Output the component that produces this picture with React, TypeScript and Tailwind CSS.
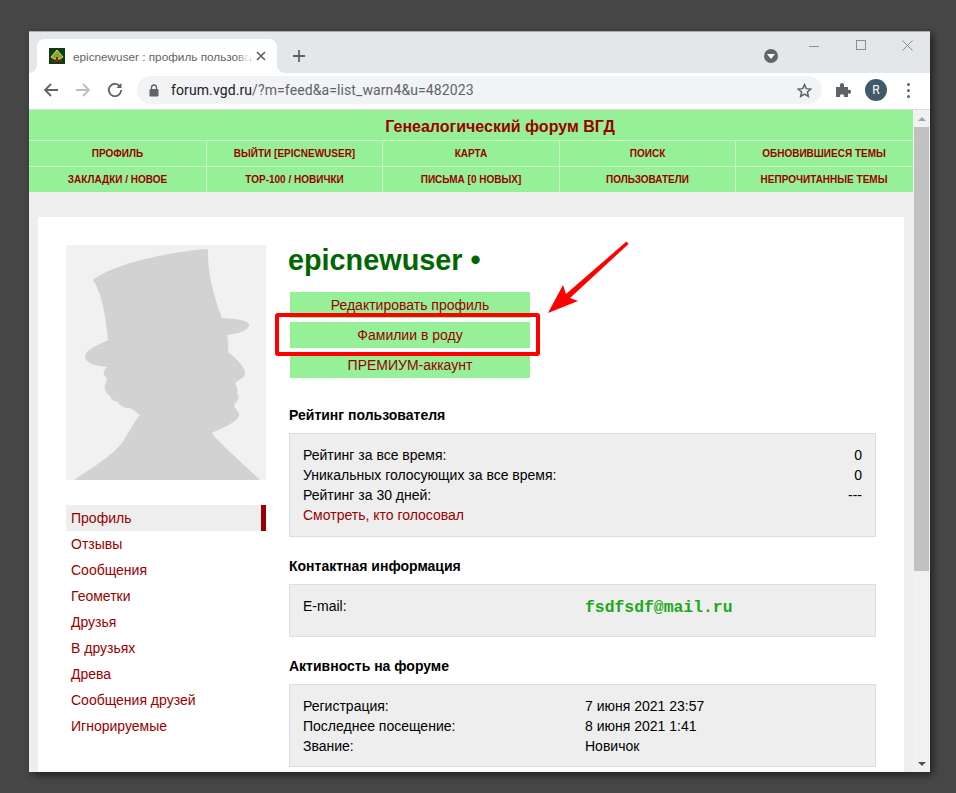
import { Fragment } from "react"

const navRows = [
  ["ПРОФИЛЬ", "ВЫЙТИ [EPICNEWUSER]", "КАРТА", "ПОИСК", "ОБНОВИВШИЕСЯ ТЕМЫ"],
  ["ЗАКЛАДКИ / НОВОЕ", "TOP-100 / НОВИЧКИ", "ПИСЬМА [0 НОВЫХ]", "ПОЛЬЗОВАТЕЛИ", "НЕПРОЧИТАННЫЕ ТЕМЫ"],
]

const sideLinks = ["Отзывы", "Сообщения", "Геометки", "Друзья", "В друзьях", "Древа", "Сообщения друзей", "Игнорируемые"]

function Favicon() {
  return (
    <svg width="16" height="16" viewBox="0 0 16 16">
      <rect width="16" height="16" fill="#0f3d0f" />
      <path d="M8 2 L14 9 L11 11 H5 L2 9 Z" fill="#7ea83a" stroke="#e8d84a" strokeWidth="1" />
      <rect x="7" y="9" width="2" height="5" fill="#a01818" />
      <path d="M3 13 H13" stroke="#a01818" strokeWidth="1" />
    </svg>
  )
}

function TabStrip() {
  return (
    <div className="flex h-[42px] items-end border-t border-[#a9abad] bg-[#e4e7ea] pl-2">
      <div className="relative flex h-[34px] w-[240px] items-center rounded-t-lg bg-white pl-3">
        {/* concave corners at the foot of the tab */}
        <div className="absolute -left-2 bottom-0 h-2 w-2 bg-white">
          <div className="h-full w-full rounded-br-lg bg-[#e4e7ea]" />
        </div>
        <div className="absolute -right-2 bottom-0 h-2 w-2 bg-white">
          <div className="h-full w-full rounded-bl-lg bg-[#e4e7ea]" />
        </div>
        <Favicon />
        <div className="relative ml-2 w-[177px]">
          <span className="whitespace-nowrap text-[11.75px] text-[#5f6368]">epicnewuser : профиль пользова</span>
          <div className="absolute inset-y-0 right-0 w-[14px] bg-gradient-to-r from-transparent to-white" />
        </div>
        <svg className="ml-[6px]" width="10" height="10" viewBox="0 0 10 10">
          <path d="M1 1 L9 9 M9 1 L1 9" stroke="#5f6368" strokeWidth="1.7" />
        </svg>
      </div>
      <svg className="mb-[10px] ml-[15px]" width="14" height="14" viewBox="0 0 14 14">
        <path d="M7 1 V13 M1 7 H13" stroke="#5f6368" strokeWidth="1.8" />
      </svg>
      <div className="ml-auto mb-[10px] flex h-[14px] w-[14px] items-center justify-center rounded-full bg-[#646464]">
        <div className="mt-px h-0 w-0 border-x-[4px] border-t-[5px] border-x-transparent border-t-white" />
      </div>
      <div className="flex h-full items-start self-start pt-[8px]">
        <svg className="ml-[31px] mt-[1px]" width="10" height="10" viewBox="0 0 10 10">
          <path d="M0 5.5 H10" stroke="#8a8c8e" strokeWidth="1" />
        </svg>
        <svg className="ml-[37px]" width="10" height="10" viewBox="0 0 10 10">
          <rect x="0.5" y="0.5" width="9" height="9" fill="none" stroke="#8a8c8e" strokeWidth="1" />
        </svg>
        <svg className="ml-[36px] mr-[17px]" width="11" height="11" viewBox="0 0 11 11">
          <path d="M0.5 0.5 L10.5 10.5 M10.5 0.5 L0.5 10.5" stroke="#8a8c8e" strokeWidth="1" />
        </svg>
      </div>
    </div>
  )
}

function Toolbar() {
  return (
    <div className="flex h-[37px] items-center border-b border-[#dadce0] bg-white pb-[2px] pl-[14px] font-['Roboto',sans-serif]">
      <svg width="16" height="16" viewBox="0 0 16 16">
        <path d="M15 8 H2 M8 2 L2 8 L8 14" fill="none" stroke="#5f6368" strokeWidth="1.8" />
      </svg>
      <svg className="ml-[16px]" width="16" height="16" viewBox="0 0 16 16">
        <path d="M1 8 H14 M8 2 L14 8 L8 14" fill="none" stroke="#bcbec0" strokeWidth="1.8" />
      </svg>
      <svg className="ml-[16px]" width="16" height="16" viewBox="0 0 16 16">
        <path d="M13.2 4.6 A6.2 6.2 0 1 0 14.2 8" fill="none" stroke="#5f6368" strokeWidth="1.8" />
        <path d="M14.5 1 V6 H9.5 Z" fill="#5f6368" />
      </svg>
      <div className="ml-[14px] flex h-[28px] w-[685px] items-center rounded-full bg-[#f1f3f4] pl-3">
        <svg width="10" height="13" viewBox="0 0 10 13">
          <path d="M2.5 5 V3.5 A2.5 2.5 0 0 1 7.5 3.5 V5" fill="none" stroke="#5f6368" strokeWidth="1.3" />
          <rect x="0.5" y="5" width="9" height="7.5" rx="1" fill="#5f6368" />
        </svg>
        <span className="ml-[12px] text-sm tracking-[0.1px] text-[#5f6368]">
          <span className="text-[#202124]">forum.vgd.ru</span>/?m=feed&amp;a=list_warn4&amp;u=482023
        </span>
        <svg className="ml-auto mr-[10px]" width="15" height="15" viewBox="0 0 24 24">
          <path d="M12 2.5 L14.9 9 L22 9.7 L16.6 14.4 L18.2 21.4 L12 17.7 L5.8 21.4 L7.4 14.4 L2 9.7 L9.1 9 Z" fill="none" stroke="#5f6368" strokeWidth="2.4" />
        </svg>
      </div>
      <svg className="ml-[13px]" width="16" height="16" viewBox="0 0 16 16">
        <path d="M1 5 H5 C4.5 2 5.5 1 7 1 C8.5 1 9.5 2 9 5 H13 V8 C15.5 7.3 16 8.5 16 9.8 C16 11.2 15.5 12.2 13 11.5 V15 H9 C9.4 13 8.5 12.3 7 12.3 C5.5 12.3 4.6 13 5 15 H1 Z" fill="#5f6368" />
      </svg>
      <div className="ml-[14px] flex h-[22px] w-[22px] items-center justify-center rounded-full bg-[#3f5a6b] text-xs text-white">R</div>
      <div className="ml-[20px] flex flex-col gap-[3px]">
        <div className="h-[3px] w-[3px] rounded-full bg-[#5f6368]" />
        <div className="h-[3px] w-[3px] rounded-full bg-[#5f6368]" />
        <div className="h-[3px] w-[3px] rounded-full bg-[#5f6368]" />
      </div>
    </div>
  )
}

function SiteNav() {
  return (
    <div className="bg-[#96f097]">
      <div className="flex h-[30px] items-center justify-center pl-[58px] pt-[3px] text-base font-bold text-[#990000]">
        Генеалогический форум ВГД
      </div>
      {navRows.map((row, i) => (
        <div key={i} className="grid h-[26px] grid-cols-[177px_176px_177px_176px_177px] border-t border-[#c6f5c6] pr-px">
          {row.map((label, j) => (
            <div
              key={label}
              className={
                j === 0
                  ? "flex items-center justify-center pt-px text-[10px] font-bold text-[#990000]"
                  : "flex items-center justify-center border-l border-[#c6f5c6] pt-px text-[10px] font-bold text-[#990000]"
              }
            >
              {label}
            </div>
          ))}
        </div>
      ))}
    </div>
  )
}

function Silhouette() {
  return (
    <svg width="200" height="235" viewBox="0 0 200 235" className="block bg-[#f1f1f1]">
      <path
        fill="#d2d2d2"
        d="M27 35 C45 20 100 7 141 4 C142 4 142 5 142 8 C142 30 148 52 156 73 C165 74 183 74 183 80 C183 86 170 89 161 90 C162 95 163 100 162 107 C170 113 179 122 179 128 C179 133 172 135 169 138 C171 142 172 146 171 148 C173 151 173 155 170 157 C168 159 168 161 169 163 C173 167 174 170 172 173 C166 180 155 183 146 188 C150 195 170 212 194 235 L8 235 C30 220 52 207 59 193 C64 186 68 176 74 170 C70 167 68 165 64 163 C58 163 54 161 52 157 C47 156 45 154 44 151 C40 148 38 145 39 140 C40 137 41 135 41 133 C37 130 36 127 41 122 C30 121 19 118 19 112 C19 105 32 100 42 95 C40 75 37 50 27 35 Z"
      />
    </svg>
  )
}

function Sidebar() {
  return (
    <div className="w-[200px]">
      <Silhouette />
      <div className="mt-[25px] flex h-[26px] items-center border-r-[5px] border-[#990000] bg-[#eeeeee] pl-[5px] text-[#990000]">
        Профиль
      </div>
      {sideLinks.map((link) => (
        <div key={link} className="flex h-[26px] items-center pl-[5px] text-[#990000]">
          {link}
        </div>
      ))}
    </div>
  )
}

function MainColumn() {
  return (
    <div className="w-[587px]">
      <h1 className="-ml-px h-[30px] text-[28.8px] font-bold leading-[30px] text-[#006600]">epicnewuser •</h1>
      <div className="ml-px mt-[17px] flex w-[240px] flex-col gap-[4px] text-[#990000]">
        <div className="flex h-[26px] items-center justify-center bg-[#96f097]">Редактировать профиль</div>
        <div className="flex h-[26px] items-center justify-center bg-[#96f097]">Фамилии в роду</div>
        <div className="flex h-[26px] items-center justify-center bg-[#96f097]">ПРЕМИУМ-аккаунт</div>
      </div>

      <h2 className="mt-[27px] h-5 font-bold leading-5">Рейтинг пользователя</h2>
      <div className="mt-2 border border-[#dddddd] bg-[#eeeeee] px-[13px] py-[11px] leading-5">
        <div className="flex justify-between"><span>Рейтинг за все время:</span><span>0</span></div>
        <div className="flex justify-between"><span>Уникальных голосующих за все время:</span><span>0</span></div>
        <div className="flex justify-between"><span>Рейтинг за 30 дней:</span><span>---</span></div>
        <div className="text-[#990000]">Смотреть, кто голосовал</div>
      </div>

      <h2 className="mt-[19px] h-5 font-bold leading-5">Контактная информация</h2>
      <div className="mt-2 grid grid-cols-[282px_1fr] border border-[#dddddd] bg-[#eeeeee] px-[13px] pb-[20px] pt-[11px] leading-5">
        <span>E-mail:</span>
        <span className="pt-[3px] font-['Liberation_Mono',monospace] text-[16.4px] font-bold leading-[17px] text-[#1aa81a]">fsdfsdf@mail.ru</span>
      </div>

      <h2 className="mt-[19px] h-5 font-bold leading-5">Активность на форуме</h2>
      <div className="mt-2 grid grid-cols-[282px_1fr] border border-[#dddddd] bg-[#eeeeee] px-[13px] pb-[10px] pt-[11px] leading-5">
        {[
          ["Регистрация:", "7 июня 2021 23:57"],
          ["Последнее посещение:", "8 июня 2021 1:41"],
          ["Звание:", "Новичок"],
        ].map(([k, v]) => (
          <Fragment key={k}>
            <span>{k}</span>
            <span>{v}</span>
          </Fragment>
        ))}
      </div>
    </div>
  )
}

function Scrollbar() {
  return (
    <div className="flex w-[17px] flex-col items-center bg-[#f1f1f1]">
      <div className="mt-[7px] h-0 w-0 border-x-[4px] border-b-[4px] border-x-transparent border-b-[#a3a3a3]" />
      <div className="mt-[6px] h-[444px] w-[15px] bg-[#c1c1c1]" />
      <div className="mt-auto mb-[6px] h-0 w-0 border-x-[4px] border-t-[4px] border-x-transparent border-t-[#505050]" />
    </div>
  )
}

export default function App() {
  return (
    <div className="relative h-[793px] w-[956px] overflow-hidden bg-[#474747] pl-[29px] pt-[31px] font-['Liberation_Sans',Arial,sans-serif] text-sm text-black">
      <div className="flex h-[741px] w-[901px] flex-col shadow-[3px_3px_8px_rgba(0,0,0,0.55)]">
        <TabStrip />
        <Toolbar />
        <div className="flex h-[662px] overflow-hidden">
          <div className="w-[884px] bg-[#eeeeee]">
            <SiteNav />
            <div className="ml-[9px] mt-[25px] flex h-[600px] w-[866px] gap-[23px] bg-white pl-[28px] pt-[28px]">
              <Sidebar />
              <MainColumn />
            </div>
          </div>
          <Scrollbar />
        </div>
      </div>

      {/* red marker drawn on top of the screenshot */}
      <div className="absolute left-[275px] top-[313px] h-[43px] w-[265px] rounded-[3px] border-[4px] border-[#ff0000]" />
      <svg className="absolute left-[540px] top-[235px]" width="100" height="90" viewBox="540 235 100 90">
        <path d="M626.5 241.5 L566 294 L563 285 L548 313 L578 301 L570 298 L628.5 244 Z" fill="#ff0000" />
      </svg>
    </div>
  )
}
